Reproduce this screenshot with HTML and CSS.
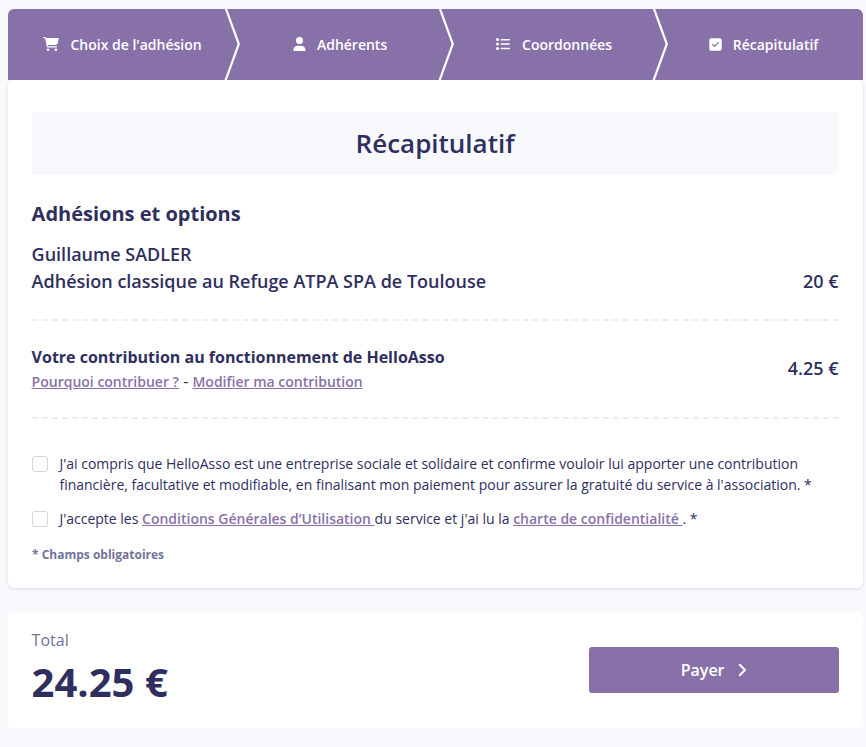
FILE: index.html
```html
<!DOCTYPE html>
<html lang="fr">
	<head>
		<meta charset="utf-8">
		<meta name="viewport" content="width=device-width, initial-scale=1">
		<title>Récapitulatif</title>
		<link rel="stylesheet" href="styles.css">
	</head>
	<body>
		<nav class="steps">
			<div class="step">
				<div class="step-label">
					<svg width="16" height="14" viewBox="0 0 576 512"><path fill="#fff" d="M0 24C0 10.700 10.700 0 24 0H69.500c22 0 41.500 12.800 50.600 32h411c26.300 0 45.500 25 38.600 50.400l-41 152.300c-8.500 31.400-37 53.300-69.500 53.300H170.700l5.400 28.500c2.200 11.300 12.100 19.500 23.600 19.500H488c13.300 0 24 10.700 24 24s-10.700 24-24 24H199.700c-34.600 0-64.300-24.600-70.700-58.500L77.400 54.500c-.7-3.800-4-6.500-7.900-6.500H24C10.700 48 0 37.300 0 24zM128 464a48 48 0 1 1 96 0 48 48 0 1 1-96 0zm336-48a48 48 0 1 1 0 96 48 48 0 1 1 0-96z"/></svg>
					<span>Choix de l'adhésion</span>
				</div>
				<svg class="arrow" width="16" height="71" viewBox="0 0 16 71"><path d="M1.300 -2L14.800 35L.6 74"/></svg>
			</div>
			<div class="step">
				<div class="step-label">
					<svg width="13" height="14" viewBox="0 0 13 14"><circle cx="6.500" cy="3.500" r="3.500" fill="#fff"/><path fill="#fff" d="M.4 14v-1c0-2.400 2-4.300 4.300-4.300h3.500c2.400 0 4.300 2 4.300 4.300v1z"/></svg>
					<span>Adhérents</span>
				</div>
				<svg class="arrow" width="16" height="71" viewBox="0 0 16 71"><path d="M1.300 -2L14.800 35L.6 74"/></svg>
			</div>
			<div class="step">
				<div class="step-label">
					<svg width="15" height="12" viewBox="0 0 15 12"><g fill="#fff"><circle cx="1.500" cy="1.600" r="1.500"/><circle cx="1.500" cy="6" r="1.500"/><circle cx="1.500" cy="10.400" r="1.500"/><rect x="4.500" y=".9" width="9.500" height="1.500" rx=".7"/><rect x="4.500" y="5.300" width="9.500" height="1.500" rx=".7"/><rect x="4.500" y="9.700" width="9.500" height="1.500" rx=".7"/></g></svg>
					<span>Coordonnées</span>
				</div>
				<svg class="arrow" width="16" height="71" viewBox="0 0 16 71"><path d="M1.300 -2L14.800 35L.6 74"/></svg>
			</div>
			<div class="step">
				<div class="step-label">
					<svg width="13" height="13" viewBox="0 0 13 13"><rect x=".3" y=".3" width="12.400" height="12.400" rx="1.700" fill="#fff"/><path d="M3.700 6.500l2 2 3.700-3.800" fill="none" stroke="#8871a9" stroke-width="1.200" stroke-linecap="round"/></svg>
					<span>Récapitulatif</span>
				</div>
			</div>
		</nav>
		<main class="card">
			<h1>Récapitulatif</h1>
			<h2>Adhésions et options</h2>
			<div class="line membership">
				<div>Guillaume SADLER<br>Adhésion classique au Refuge ATPA SPA de Toulouse</div>
				<div class="price">20 €</div>
			</div>
			<div class="line contribution">
				<div>
					<h3>Votre contribution au fonctionnement de HelloAsso</h3>
					<p><a href="#">Pourquoi contribuer ?</a> - <a href="#">Modifier ma contribution</a></p>
				</div>
				<div class="price">4.25 €</div>
			</div>
			<label class="check">
				<input type="checkbox">
				<span>J'ai compris que HelloAsso est une entreprise sociale et solidaire et confirme vouloir lui apporter une contribution financière, facultative et modifiable, en finalisant mon paiement pour assurer la gratuité du service à l'association. *</span>
			</label>
			<label class="check">
				<input type="checkbox">
				<span>J'accepte les <a href="#">Conditions Générales d’Utilisation </a>du service et j'ai lu la <a href="#">charte de confidentialité </a>. *</span>
			</label>
			<p class="required">* Champs obligatoires</p>
		</main>
		<footer class="total">
			<div>
				<div class="total-label">Total</div>
				<div class="amount">24.25 €</div>
			</div>
			<button class="pay">
				Payer
				<svg width="9" height="14" viewBox="0 0 9 14"><path d="M1.800 1.700L7 7l-5.200 5.300" fill="none" stroke="#fff" stroke-width="2" stroke-linecap="round" stroke-linejoin="round"/></svg>
			</button>
		</footer>
	</body>
</html>
```
FILE: styles.css
```css
*{
	box-sizing:border-box;
}
body{
	margin:0;
	padding:9px 3.4px 0 7.6px;
	background:#f8f9fd;
	color:#2e2f5e;
	font-family:"Open Sans", sans-serif;
	font-size:14px;
	line-height:21px;
}
h1, h2, h3, p{
	margin:0;
}
a{
	color:#8871a9;
	font-weight:600;
	text-decoration:underline;
}
.steps{
	display:grid;
	grid-template-columns:232px 214px 214px 195px;
	height:71px;
	border-radius:6px 6px 0 0;
	background:#8871a9;
	color:#fff;
	font-weight:600;
	overflow:hidden;
}
.step{
	display:flex;
}
.step-label{
	flex:1;
	display:flex;
	align-items:center;
	justify-content:center;
	gap:11px;
	padding-left:3px;
}
.step-label svg{
	margin-bottom:1px;
}
.step:first-child .step-label{
	padding-left:14px;
}
.step:last-child .step-label{
	padding:0 3px 0 0;
}
.arrow path{
	fill:none;
	stroke:#fff;
	stroke-width:2.2;
}
.card{
	height:508px;
	padding:32px 24px 0;
	border-radius:6px;
	background:#fff;
	box-shadow:0 1px 3px rgba(46,47,94,.15);
}
h1{
	height:63px;
	background:#f8f9fd;
	font-size:26px;
	font-weight:600;
	line-height:63px;
	text-align:center;
}
h2{
	margin-top:24px;
	font-size:20px;
	line-height:30px;
}
.line{
	display:flex;
	justify-content:space-between;
	border-bottom:2px dashed #ebebf0;
}
.price{
	font-size:18px;
	font-weight:600;
	line-height:27px;
}
.membership{
	align-items:flex-end;
	padding:12px 0 24px;
	font-size:18px;
	font-weight:600;
	line-height:27px;
}
.contribution{
	align-items:center;
	height:98px;
}
.contribution .price{
	padding-bottom:1px;
}
h3{
	font-size:16px;
	line-height:24px;
}
.contribution p{
	height:24px;
	font-size:16px;
	line-height:24px;
}
.contribution a{
	font-size:14px;
}
.check{
	display:flex;
	align-items:flex-start;
	gap:11.8px;
	margin-top:13px;
}
.contribution + .check{
	margin-top:34px;
}
.check input{
	flex:none;
	appearance:none;
	width:16px;
	height:16px;
	margin:3px 0 0;
	border:1px solid #d5d3e2;
	border-radius:3px;
	background:#fff;
}
.required{
	margin-top:17px;
	padding-left:.4px;
	color:#72739b;
	font-size:12px;
	font-weight:700;
	line-height:18px;
}
.total{
	display:flex;
	align-items:center;
	justify-content:space-between;
	height:116px;
	margin-top:24px;
	padding:0 24px;
	border-radius:6px;
	background:#fff;
}
.total-label{
	color:#72739b;
	font-size:16px;
	line-height:24px;
}
.amount{
	font-size:40px;
	font-weight:700;
	line-height:60px;
}
.pay{
	display:flex;
	align-items:center;
	justify-content:center;
	gap:13px;
	width:250px;
	height:46px;
	border:0;
	border-radius:3px;
	background:#8871a9;
	color:#fff;
	font:600 16px "Open Sans", sans-serif;
}
```
